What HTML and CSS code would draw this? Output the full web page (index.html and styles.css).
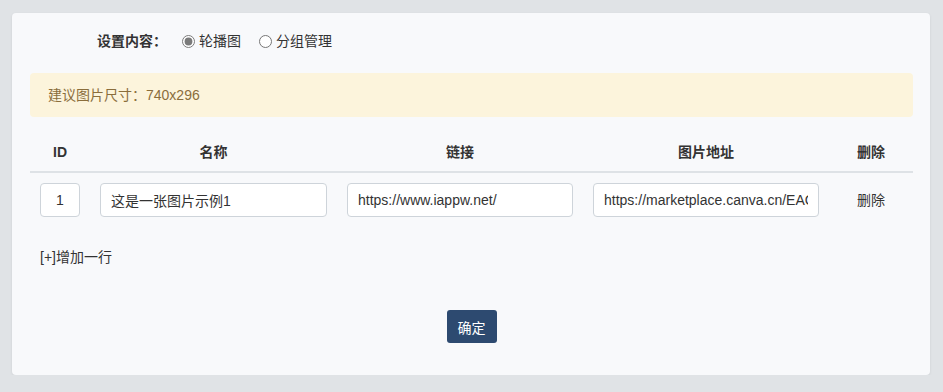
FILE: index.html
```html
<!DOCTYPE html>
<html lang="zh-CN">
<head>
    <meta charset="UTF-8">
    <meta name="viewport" content="width=device-width, initial-scale=1.0">
    <title>设置内容</title>
    <link rel="stylesheet" href="styles.css">
</head>
<body>
    <div class="card">
        <div class="form-row">
            <span class="form-label">设置内容：</span>
            <label class="radio"><input type="radio" name="type" checked> 轮播图</label>
            <label class="radio"><input type="radio" name="type"> 分组管理</label>
        </div>

        <div class="alert">建议图片尺寸：740x296</div>

        <table class="slides">
            <colgroup>
                <col class="col-id">
                <col class="col-name">
                <col class="col-wide">
                <col class="col-wide">
                <col>
            </colgroup>
            <thead>
                <tr>
                    <th>ID</th>
                    <th>名称</th>
                    <th>链接</th>
                    <th>图片地址</th>
                    <th>删除</th>
                </tr>
            </thead>
            <tbody>
                <tr>
                    <td><input class="field field-id" type="text" value="1"></td>
                    <td><input class="field" type="text" value="这是一张图片示例1"></td>
                    <td><input class="field" type="text" value="https://www.iappw.net/"></td>
                    <td><input class="field" type="text" value="https://marketplace.canva.cn/EAGxQ1b2c3d/1/0/1600w/canva.jpg"></td>
                    <td class="del">删除</td>
                </tr>
            </tbody>
        </table>

        <div class="add-row">[+]增加一行</div>

        <div class="actions">
            <button class="btn-ok">确定</button>
        </div>
    </div>
</body>
</html>
```

FILE: styles.css
```css
body {
    margin: 0;
    padding: 13px 13px 0 12px;
    background-color: #e0e3e6;
    font-family: "Liberation Sans", "Noto Sans CJK SC", sans-serif;
    font-size: 14px;
    color: #333;
}
.card {
    width: 918px;
    box-sizing: border-box;
    padding: 18px 17px 32px 18px;
    background-color: #f8f9fb;
    border-radius: 4px;
    box-shadow: 0 1px 3px rgba(0, 0, 0, 0.08);
}
.form-row {
    display: flex;
    align-items: center;
    height: 20px;
    line-height: 20px;
}
.form-label {
    width: 137px;
    text-align: right;
    font-weight: bold;
    margin-right: 15px;
}
.radio {
    display: flex;
    align-items: center;
    margin-right: 18px;
}
.radio input {
    width: 13px;
    height: 13px;
    margin: 0 4px 0 0;
    accent-color: #7a7a7a;
}
.alert {
    margin-top: 22px;
    padding: 12px 18px;
    line-height: 20px;
    background-color: #fcf4dc;
    color: #8a6d3b;
    border-radius: 4px;
}
.slides {
    width: 100%;
    margin-top: 16px;
    border-collapse: collapse;
    table-layout: fixed;
}
.col-id {
    width: 60px;
}
.col-name {
    width: 247px;
}
.col-wide {
    width: 246px;
}
.slides th {
    padding: 9px 10px;
    line-height: 20px;
    font-weight: bold;
    text-align: center;
    border-bottom: 2px solid #dee2e6;
}
.slides td {
    padding: 10px;
    line-height: 20px;
    text-align: center;
}
.field {
    display: block;
    width: 100%;
    height: 34px;
    box-sizing: border-box;
    padding: 0 10px;
    border: 1px solid #ced4da;
    border-radius: 4px;
    background-color: #fff;
    font-family: inherit;
    font-size: 14px;
    color: #333;
    outline: none;
}
.field-id {
    text-align: center;
}
.del {
    color: #333;
    padding-bottom: 12px;
}
.add-row {
    margin-top: 20px;
    padding-left: 10px;
    line-height: 20px;
}
.actions {
    margin-top: 43px;
    display: flex;
    justify-content: center;
}
.btn-ok {
    height: 33px;
    padding: 0 11px;
    border: none;
    border-radius: 3px;
    background-color: #2d4a70;
    color: #fff;
    font-family: inherit;
    font-size: 14px;
    cursor: pointer;
}
```
